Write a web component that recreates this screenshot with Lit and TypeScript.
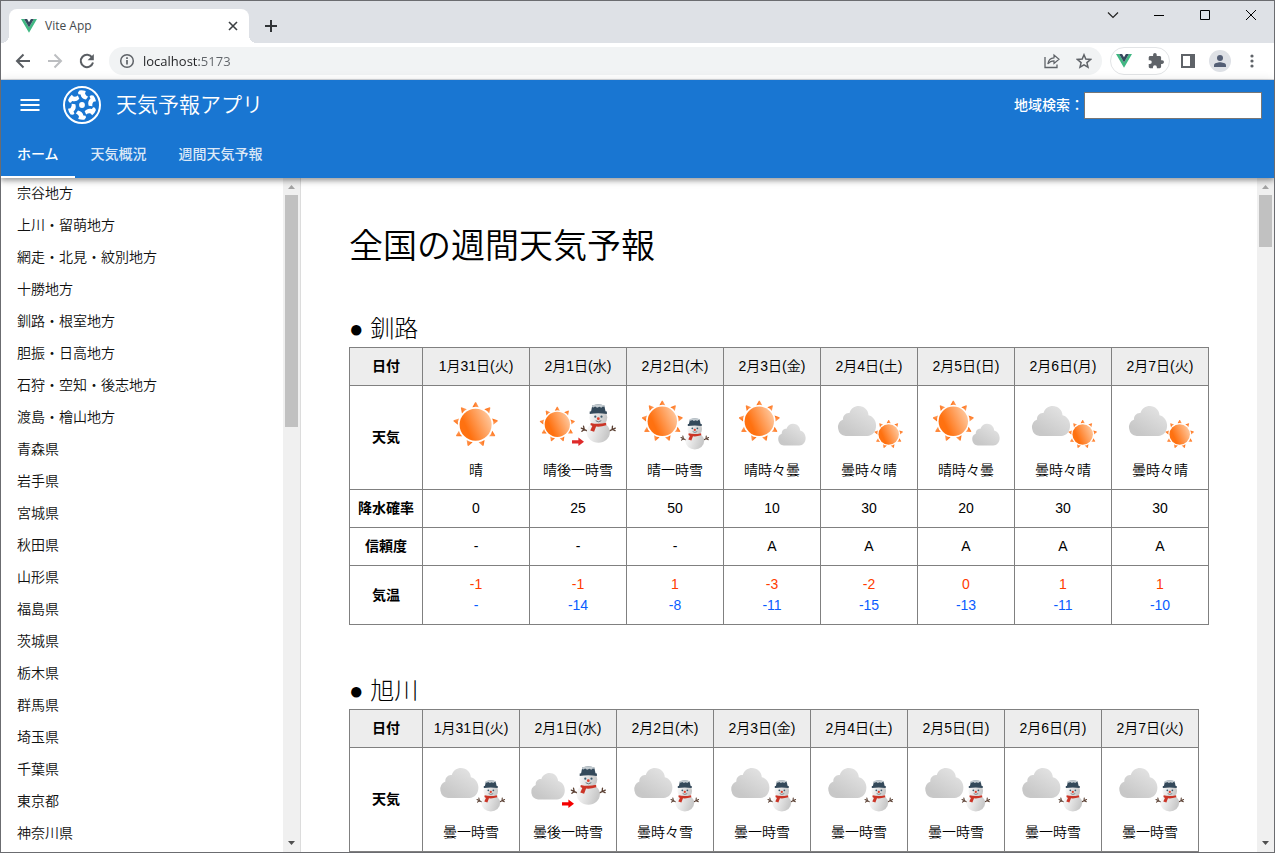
import { LitElement, html, svg, css, nothing } from "lit";
import { customElement, property, state } from "lit/decorators.js";
import { classMap } from "lit/directives/class-map.js";

const vueLogo = svg`
  <path fill="#41b883" d="M0 0h3.1L8 8.4 12.9 0H16L8 13.8z" />
  <path fill="#34495e" d="M3.1 0h3L8 3.3 9.9 0h3L8 8.4z" />`;

const rays = [0, 40, 80, 120, 160, 200, 240, 280, 320];

const sun = (x: number, y: number, scale: number) => svg`
  <g transform="translate(${x} ${y}) scale(${scale})">
    <circle r="16" fill="url(#sun)" />
    ${rays.map((a) => svg`<path d="M-3.2-17.4Q0-18.4 3.2-17.4L.5-22.400h-1z" fill="url(#ray)" transform="rotate(${a})" />`)}
  </g>`;

const cloud = (x: number, y: number, scale: number) => svg`
  <path
    transform="translate(${x} ${y}) scale(${scale})"
    fill="url(#cloud)"
    d="M8 30A8.6 8.6 0 0 1 5.4 13.6C4.8 9.4 8.6 6.2 11.8 7C13 2.6 17 0 21 0C26.4 0 30.6 4 30.8 9.2C35.4 10.2 38.4 14.6 38.4 19.6C38.4 25.6 34.6 30 29.6 30z" />`;

const snowman = (x: number, y: number, scale: number) => svg`
  <g transform="translate(${x} ${y}) scale(${scale})">
    <g stroke="#5b4033" stroke-width="1.3" fill="none" stroke-linecap="round">
      <path d="M8.500 27L1 23.400M4 24.800L1.600 26.600M4 24.800L3.200 21.400" />
      <path d="M27.500 27L35 23.400M32 24.800L34.800 26M31.800 24.800L32.200 21.400" />
    </g>
    <ellipse cx="18" cy="27.600" rx="11.600" ry="10.400" fill="url(#snow)" />
    <circle cx="18" cy="12.800" r="9" fill="url(#snow)" />
    <path d="M12 .8Q18-1 24 .8L25.400 7.600H10.600z" fill="#34495a" />
    <path d="M12 .6Q18-1.200 24 .6L24.300 2.200 22.600 1.700 21 3 19.200 2 16.800 3 14.800 1.800 13.200 2.800 11.700 2.200z" fill="#c3cbd0" />
    <path d="M9.400 6.800Q18 5.400 26.600 6.800V9.200Q18 8 9.400 9.200z" fill="#34495a" />
    <circle cx="15" cy="12" r="1.100" fill="#3d5c70" />
    <circle cx="21.200" cy="12" r="1.100" fill="#3d5c70" />
    <circle cx="18" cy="14" r="1.400" fill="#e0402c" />
    <path d="M15.400 16Q18 18.200 21 16" stroke="#5f6b73" stroke-width=".9" fill="none" />
    <path d="M10.400 18.200Q18 20 25.800 18L26 20.600Q20 22.400 15.800 21.800L13.800 27 10 25.800 12 21.400 10.200 20.400z" fill="#cb3527" />
  </g>`;

const arrow = (color: string) => svg`
  <path d="M34 46.200h6.400v-2.600l5.600 4.200-5.600 4.200v-2.600H34z" fill=${color} />`;

const scenes: Record<string, () => unknown> = {
  "晴": () => sun(44.6, 30.7, 1),
  "晴後一時雪": () => svg`${sun(19.3, 30.4, 0.79)}${snowman(42.3, 10.7, 1)}${arrow("#df2a2a")}`,
  "晴一時雪": () => svg`${sun(27.3, 27.3, 0.92)}${snowman(45.2, 24.6, 0.81)}`,
  "晴時々曇": () => svg`${sun(27.3, 27.3, 0.92)}${cloud(46, 29.8, 0.72)}`,
  "曇時々晴": () => svg`${cloud(8.7, 12, 1)}${sun(59.7, 40.4, 0.64)}`,
  "曇一時雪": () => svg`${cloud(9, 12, 1)}${snowman(45.2, 24.6, 0.81)}`,
  "曇時々雪": () => svg`${cloud(9, 12, 1)}${snowman(45.2, 24.6, 0.81)}`,
  "曇後一時雪": () => svg`${cloud(3, 17, 0.88)}${snowman(42.3, 10.7, 1)}${arrow("#f40000")}`,
};

@customElement("weather-icon")
export class WeatherIcon extends LitElement {
  @property() name = "晴";

  static styles = css`
    :host { display: block; }
    svg { display: block; margin: 0 auto 6px; }
  `;

  render() {
    const width = this.name === "晴" ? 90 : 80;
    return html`<svg width=${width} height="60" viewBox="0 0 ${width} 60" aria-hidden="true">
      <defs>
        <linearGradient id="sun" x1="0" y1=".65" x2="1" y2=".2">
          <stop offset=".2" stop-color="#ff7110" />
          <stop offset="1" stop-color="#ffcda6" />
        </linearGradient>
        <linearGradient id="ray" x1="0" y1="0" x2="1" y2="0">
          <stop offset="0" stop-color="#ff6a0a" />
          <stop offset="1" stop-color="#ffa468" />
        </linearGradient>
        <linearGradient id="cloud" x1="0" y1="1" x2=".8" y2="0">
          <stop offset=".2" stop-color="#c8c8c8" />
          <stop offset="1" stop-color="#e4e4e4" />
        </linearGradient>
        <linearGradient id="snow" x1="0" y1="0" x2="1" y2=".3">
          <stop offset=".2" stop-color="#f4f4f4" />
          <stop offset="1" stop-color="#c8c8c8" />
        </linearGradient>
      </defs>
      ${scenes[this.name]()}
    </svg>`;
  }
}

interface Day {
  weather: string;
  rain?: string;
  trust?: string;
  high?: string;
  low?: string;
}

interface City {
  name: string;
  days: Day[];
}

const dates = ["1月31日(火)", "2月1日(水)", "2月2日(木)", "2月3日(金)", "2月4日(土)", "2月5日(日)", "2月6日(月)", "2月7日(火)"];

const day = (weather: string, rain: string, trust: string, high: string, low: string): Day => ({ weather, rain, trust, high, low });

const cities: City[] = [
  {
    name: "釧路",
    days: [
      day("晴", "0", "-", "-1", "-"),
      day("晴後一時雪", "25", "-", "-1", "-14"),
      day("晴一時雪", "50", "-", "1", "-8"),
      day("晴時々曇", "10", "A", "-3", "-11"),
      day("曇時々晴", "30", "A", "-2", "-15"),
      day("晴時々曇", "20", "A", "0", "-13"),
      day("曇時々晴", "30", "A", "1", "-11"),
      day("曇時々晴", "30", "A", "1", "-10"),
    ],
  },
  {
    name: "旭川",
    days: ["曇一時雪", "曇後一時雪", "曇時々雪", "曇一時雪", "曇一時雪", "曇一時雪", "曇一時雪", "曇一時雪"].map((weather) => ({ weather })),
  },
];

const areas = [
  "宗谷地方", "上川・留萌地方", "網走・北見・紋別地方", "十勝地方", "釧路・根室地方", "胆振・日高地方",
  "石狩・空知・後志地方", "渡島・檜山地方", "青森県", "岩手県", "宮城県", "秋田県", "山形県", "福島県",
  "茨城県", "栃木県", "群馬県", "埼玉県", "千葉県", "東京都", "神奈川県",
];

const tabs = ["ホーム", "天気概況", "週間天気予報"];

@customElement("app-root")
export class AppRoot extends LitElement {
  @state() private tab = 0;

  static styles = css`
    :host {
      display: flex;
      flex-direction: column;
      height: 100vh;
      box-sizing: border-box;
      border: 1px solid #6b6c70;
      overflow: hidden;
      background: #fff;
      color: #000;
      font: 14px/21px "Liberation Sans", "Noto Sans CJK JP", sans-serif;
    }
    *, *::before, *::after { box-sizing: border-box; }
    button { border: 0; padding: 0; background: none; color: inherit; font: inherit; display: grid; place-items: center; }
    svg { display: block; }

    .strip { display: flex; height: 42px; background: #dee1e6; padding-left: 8px; flex: none; }
    .page-tab {
      display: flex; align-items: center; width: 240px; height: 34px; margin-top: 8px; padding: 0 10px 0 12px;
      background: #fff; border-radius: 8px 8px 0 0; color: #45494d; position: relative;
      font: 12px/16px "Open Sans", "Noto Sans", sans-serif;
    }
    .page-tab::before, .page-tab::after {
      content: ""; position: absolute; bottom: 0; width: 8px; height: 8px;
    }
    .page-tab::before { right: 100%; background: radial-gradient(circle at 0 0, transparent 8px, #fff 8px); }
    .page-tab::after { left: 100%; background: radial-gradient(circle at 100% 0, transparent 8px, #fff 8px); }
    .page-tab span { flex: 1; margin-left: 8px; }
    .new-tab { width: 28px; height: 34px; margin: 8px 0 0 8px; }
    .window-buttons { display: flex; margin-left: auto; height: 28px; }
    .window-buttons button { width: 46px; }

    .toolbar { display: flex; align-items: center; height: 37px; flex: none; border-bottom: 1px solid #dadce0; color: #5f6368; }
    .nav { display: flex; padding-left: 6px; }
    .nav button { width: 32px; height: 32px; }
    .address {
      flex: 1; display: flex; align-items: center; height: 28px; margin-left: 6px; padding: 0 2px 0 10px;
      border-radius: 14px; background: #f1f3f4;
    }
    .address input {
      flex: 1; min-width: 0; height: 24px; border: 0; outline: 0; padding: 0; margin-left: 8px;
      font: 13px/24px "Open Sans", "Noto Sans", sans-serif;
      background: linear-gradient(90deg, #202124 56px, #5f6368 56px);
      -webkit-background-clip: text; background-clip: text; color: transparent;
    }
    .address button, .tools button { width: 32px; height: 28px; }
    .extensions { display: flex; gap: 6px; border: 1px solid #e2e4e6; border-radius: 14px; height: 28px; width: 60px; margin-left: 8px; }
    .extensions button { width: 26px; height: 26px; }
    .tools { display: flex; align-items: center; margin-left: 2px; padding-right: 6px; }

    header {
      flex: none; background: #1976d2; color: #fff; z-index: 1;
      box-shadow: 0 2px 4px rgba(0, 0, 0, 0.2), 0 4px 5px rgba(0, 0, 0, 0.14), 0 1px 10px rgba(0, 0, 0, 0.12);
    }
    .bar { display: flex; align-items: center; height: 50px; padding: 0 12px; }
    .menu { width: 34px; height: 40px; }
    .logo { margin-left: 16px; }
    .title { flex: 1; padding-left: 15px; font-size: 21px; line-height: 32px; font-weight: 350; }
    .bar label { display: flex; align-items: center; font-weight: 500; }
    .bar input { width: 178px; height: 27px; border: 1px solid #767676; padding: 0 4px; background: #fff; font: inherit; }
    .tabs { display: flex; height: 48px; }
    .tabs button { padding: 0 16px; height: 48px; font-weight: 500; color: rgba(255, 255, 255, 0.85); border-bottom: 2px solid transparent; border-top: 2px solid transparent; }
    .tabs .active { color: #fff; border-bottom-color: #fff; }

    .body { flex: 1; display: flex; min-height: 0; }
    aside { flex: none; width: 300px; display: flex; border-right: 1px solid #dcdcdc; }
    .areas { flex: 1; margin: 0; padding: 0; list-style: none; overflow: hidden; }
    .areas a { display: block; padding: 5px 16px 6px; color: #111; text-decoration: none; font-weight: 350; }
    .scroll { flex: none; width: 17px; display: flex; flex-direction: column; align-items: center; background: #f0f0f0; }
    .scroll svg { flex: none; }
    .thumb { width: 13px; background: #c1c1c1; }
    .thumb.long { height: 232px; }
    .thumb.short { height: 52px; }
    .scroll .end { margin-top: auto; }

    main { flex: 1; min-width: 0; overflow: hidden; padding: 48px; }
    h1 { margin: 0 0 45px; font-size: 34px; line-height: 40px; font-weight: 350; }
    h2 { margin: 0; font-size: 24px; line-height: 36px; font-weight: 300; }
    section { margin-bottom: 48px; }
    table { border-collapse: collapse; text-align: center; }
    th, td { border: 1px solid #808080; padding: 8px; font-weight: 350; white-space: nowrap; }
    th[scope="row"], .corner { font-weight: 700; }
    .corner { min-width: 73px; }
    thead { background: #ededed; }
    .high { color: #ff3c00; }
    .low { color: #0a5cff; }
  `;

  private arrowUp = html`<svg width="17" height="17" viewBox="0 0 17 17"><path d="M5 11h7L8.500 7z" fill="#a3a3a3" /></svg>`;
  private arrowDown = html`<svg class="end" width="17" height="17" viewBox="0 0 17 17"><path d="M5 6h7L8.500 10z" fill="#505050" /></svg>`;

  private chrome() {
    return html`
      <div class="strip">
        <div class="page-tab">
          <svg width="16" height="16" viewBox="0 -1 16 16">${vueLogo}</svg>
          <span>Vite App</span>
          <button aria-label="タブを閉じる">
            <svg width="12" height="12" viewBox="0 0 12 12"><path d="M2 2l8 8M10 2l-8 8" stroke="#3c4043" stroke-width="1.600" /></svg>
          </button>
        </div>
        <button class="new-tab" aria-label="新しいタブ">
          <svg width="14" height="14" viewBox="0 0 14 14"><path d="M7 1v12M1 7h12" stroke="#303336" stroke-width="2" /></svg>
        </button>
        <div class="window-buttons">
          <button aria-label="タブを検索"><svg width="12" height="8" viewBox="0 0 12 8"><path d="M1 1.500l5 5 5-5" fill="none" stroke="#222" stroke-width="1.200" /></svg></button>
          <button aria-label="最小化"><svg width="10" height="10" viewBox="0 0 10 10"><path d="M0 5.500h10" stroke="#000" /></svg></button>
          <button aria-label="最大化"><svg width="10" height="10" viewBox="0 0 10 10"><path d="M.5.5h9v9h-9z" fill="none" stroke="#000" /></svg></button>
          <button aria-label="閉じる"><svg width="10" height="10" viewBox="0 0 10 10"><path d="M0 0l10 10M10 0L0 10" stroke="#000" /></svg></button>
        </div>
      </div>
      <div class="toolbar">
        <div class="nav">
          <button aria-label="戻る"><svg width="16" height="16" viewBox="0 0 16 16"><path d="M15 8H2M8.500 1.500L2 8l6.500 6.500" fill="none" stroke="#5a5e63" stroke-width="2" /></svg></button>
          <button aria-label="進む"><svg width="16" height="16" viewBox="0 0 16 16"><path d="M1 8h13M7.500 1.500L14 8l-6.500 6.500" fill="none" stroke="#bcbec1" stroke-width="2" /></svg></button>
          <button aria-label="再読み込み"><svg width="16" height="16" viewBox="0 0 16 16"><path d="M13.200 4.600A6.200 6.200 0 1 0 14 9.600" fill="none" stroke="#5a5e63" stroke-width="2" /><path d="M14.800 1v6.200H8.600z" fill="#5a5e63" /></svg></button>
        </div>
        <div class="address">
          <svg width="16" height="16" viewBox="0 0 16 16"><circle cx="8" cy="8" r="6.300" fill="none" stroke="#5f6368" stroke-width="1.500" /><path d="M8 7v4.500M8 4.300v1.700" stroke="#5f6368" stroke-width="1.700" /></svg>
          <input aria-label="アドレス" value="localhost:5173" />
          <button aria-label="共有"><svg width="16" height="16" viewBox="0 0 16 16"><path d="M1 4v10.500h12v-3" fill="none" stroke="#5f6368" stroke-width="1.300" /><path d="M3.800 11C4.400 7 6.600 5 10 4.800V2l5 4.300-5 4.200V7.800C7.400 7.800 5.600 8.600 3.800 11z" fill="none" stroke="#5f6368" stroke-width="1.200" /></svg></button>
          <button aria-label="ブックマーク"><svg width="16" height="16" viewBox="0 0 16 16"><path d="M8 1.800l1.800 4.300 4.700.4-3.600 3.100 1.100 4.600L8 11.800l-4 2.400 1.100-4.600-3.600-3.100 4.700-.4z" fill="none" stroke="#5f6368" stroke-width="1.500" /></svg></button>
        </div>
        <div class="extensions">
          <button aria-label="Vue.js devtools"><svg width="16" height="16" viewBox="0 -1 16 16">${vueLogo}</svg></button>
          <button aria-label="拡張機能"><svg width="16" height="16" viewBox="1 1 22 22"><path fill="#5f6368" d="M20.500 11H19V7c0-1.100-.9-2-2-2h-4V3.500a2.500 2.500 0 0 0-5 0V5H4c-1.100 0-2 .9-2 2v3.800h1.500a2.700 2.700 0 0 1 0 5.400H2V20c0 1.100.9 2 2 2h3.800v-1.500a2.700 2.700 0 0 1 5.400 0V22H17c1.100 0 2-.9 2-2v-4h1.500a2.500 2.500 0 0 0 0-5z" /></svg></button>
        </div>
        <div class="tools">
          <button aria-label="サイドパネル"><svg width="14" height="14" viewBox="0 0 14 14"><path fill="#5f6368" fill-rule="evenodd" d="M0 0h14v14H0zM2 2v10h7V2z" /></svg></button>
          <button aria-label="プロフィール"><svg width="22" height="22" viewBox="0 0 22 22"><circle cx="11" cy="11" r="11" fill="#dee1e6" /><circle cx="11" cy="8" r="3" fill="#535e75" /><path d="M5 17v-1.800C5 13.200 9 12.300 11 12.300s6 .9 6 2.900V17z" fill="#535e75" /></svg></button>
          <button aria-label="メニュー"><svg width="4" height="14" viewBox="0 0 4 14"><g fill="#5f6368"><circle cx="2" cy="2" r="1.600" /><circle cx="2" cy="7" r="1.600" /><circle cx="2" cy="12" r="1.600" /></g></svg></button>
        </div>
      </div>`;
  }

  private header() {
    return html`
      <header>
        <div class="bar">
          <button class="menu" aria-label="Menu">
            <svg width="20" height="12" viewBox="0 0 20 12"><path d="M.5 1h19M.5 6h19M.5 11h19" stroke="#fff" stroke-width="2" /></svg>
          </button>
          <svg class="logo" width="38" height="38" viewBox="-19 -19 38 38">
            <circle r="18" fill="none" stroke="#fff" stroke-width="2" />
            <circle r="2.900" fill="#fff" />
            ${[0, 60, 120, 180, 240, 300].map(
              (a) => svg`<path fill="#fff" transform="rotate(${a})" d="M-4-12.600L-2.600-14.600Q0-15.200 3.800-14L3-11.600C3.600-10 4.600-9 6.200-8.400L4-5.400C1-6-1-7.800-1.400-10.600L-3.600-10.800z" />`
            )}
          </svg>
          <div class="title">天気予報アプリ</div>
          <label>地域検索：<input type="text" /></label>
        </div>
        <nav class="tabs">
          ${tabs.map(
            (name, i) => html`<button class=${classMap({ active: this.tab === i })} @click=${() => (this.tab = i)}>${name}</button>`
          )}
        </nav>
      </header>`;
  }

  private city(city: City) {
    const row = (label: string, cell: (d: Day) => unknown) => html`
      <tr><th scope="row">${label}</th>${city.days.map((d) => html`<td>${cell(d)}</td>`)}</tr>`;
    const detailed = city.days.some((d) => d.rain !== undefined);
    return html`
      <section>
        <h2>● ${city.name}</h2>
        <table>
          <thead>
            <tr><th class="corner" scope="col">日付</th>${dates.map((d) => html`<th scope="col">${d}</th>`)}</tr>
          </thead>
          <tbody>
            ${row("天気", (d) => html`<weather-icon name=${d.weather}></weather-icon>${d.weather}`)}
            ${detailed
              ? html`
                  ${row("降水確率", (d) => d.rain)}
                  ${row("信頼度", (d) => d.trust)}
                  ${row("気温", (d) => html`<div class="high">${d.high}</div><div class="low">${d.low}</div>`)}`
              : nothing}
          </tbody>
        </table>
      </section>`;
  }

  render() {
    return html`
      ${this.chrome()}
      ${this.header()}
      <div class="body">
        <aside>
          <ul class="areas">${areas.map((a) => html`<li><a href="#">${a}</a></li>`)}</ul>
          <div class="scroll">${this.arrowUp}<div class="thumb long"></div>${this.arrowDown}</div>
        </aside>
        <main>
          <h1>全国の週間天気予報</h1>
          ${cities.map((c) => this.city(c))}
        </main>
        <div class="scroll">${this.arrowUp}<div class="thumb short"></div>${this.arrowDown}</div>
      </div>`;
  }
}
